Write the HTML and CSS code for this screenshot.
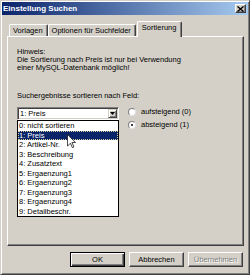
FILE: index.html
```html
<!DOCTYPE html>
<html>
<head>
<meta charset="utf-8">
<link rel="stylesheet" href="styles.css">
</head>
<body>
<div class="window">
  <div class="titlebar">
    <span class="title">Einstellung Suchen</span>
    <span class="close"><svg width="7" height="6" viewBox="0 0 7 6"><path d="M0.5 0.5 L6.5 5.5 M6.5 0.5 L0.5 5.5" stroke="#000" stroke-width="1.4"/></svg></span>
  </div>
  <div class="tabs">
    <div class="tab">Vorlagen</div>
    <div class="tab">Optionen für Suchfelder</div>
    <div class="tab active">Sortierung</div>
  </div>
  <div class="panel">
    <p class="hint">Hinweis:<br>Die Sortierung nach Preis ist nur bei Verwendung<br>einer MySQL-Datenbank möglich!</p>
    <p class="label">Suchergebnisse sortieren nach Feld:</p>
    <div class="row">
      <div class="combo">
        <div class="combo-box">
          <span class="value">1: Preis</span>
          <span class="arrow-btn"><svg width="5" height="3" viewBox="0 0 5 3"><path d="M0 0 H5 L2.5 3 Z" fill="#000"/></svg></span>
        </div>
        <ul class="list">
          <li>0: nicht sortieren</li>
          <li class="sel">1: Preis</li>
          <li>2: Artikel-Nr.</li>
          <li>3: Beschreibung</li>
          <li>4: Zusatztext</li>
          <li>5: Ergaenzung1</li>
          <li>6: Ergaenzung2</li>
          <li>7: Ergaenzung3</li>
          <li>8: Ergaenzung4</li>
          <li>9: Detailbeschr.</li>
        </ul>
        <svg class="cursor" width="9" height="14" viewBox="0 0 12 19"><path d="M0.5 0.5 L0.5 16.5 L4.5 12.5 L7.2 18.5 L9.3 17.6 L6.6 11.5 L11.5 11.5 Z" fill="#fff" stroke="#000" stroke-width="1"/></svg>
      </div>
      <div class="radios">
        <div class="radio"><span class="dot"></span><span>aufsteigend (0)</span></div>
        <div class="radio"><span class="dot checked"></span><span>absteigend (1)</span></div>
      </div>
    </div>
  </div>
  <div class="buttons">
    <button class="btn default">OK</button>
    <button class="btn">Abbrechen</button>
    <button class="btn disabled">Übernehmen</button>
  </div>
</div>
</body>
</html>
```
FILE: styles.css
```css
html, body {
  margin: 0;
  padding: 0;
  background: #d4d0c8;
}
.window {
  width: 250px;
  height: 275px;
  box-sizing: border-box;
  background: #d4d0c8;
  border: 1px solid;
  border-color: #d4d0c8 #404040 #404040 #d4d0c8;
  box-shadow: inset 1px 1px #fff, inset -1px -1px #808080;
  padding: 1px;
  display: flex;
  flex-direction: column;
  font-family: "Liberation Sans", Arial, sans-serif;
  font-size: 7.5px;
  color: #000;
}
.titlebar {
  height: 13px;
  flex: none;
  display: flex;
  align-items: center;
  justify-content: space-between;
  background: linear-gradient(to right, #0a246a, #a6caf0);
}
.title {
  color: #fff;
  font-weight: bold;
  font-size: 8px;
  line-height: 13px;
  padding-left: 1px;
}
.close {
  width: 11px;
  height: 9px;
  box-sizing: border-box;
  margin-right: 2px;
  background: #d4d0c8;
  border: 1px solid;
  border-color: #fff #404040 #404040 #fff;
  box-shadow: inset -1px -1px #808080;
  display: flex;
  align-items: center;
  justify-content: center;
}
.close svg { display: block; }
.tabs {
  flex: none;
  height: 15px;
  margin: 6px 4px 0 5px;
  padding-left: 2px;
  display: flex;
  align-items: flex-end;
  position: relative;
  z-index: 1;
}
.tab {
  height: 12px;
  box-sizing: border-box;
  border-top: 1px solid #fff;
  border-left: 1px solid #fff;
  border-right: 1px solid #404040;
  box-shadow: inset -1px 0 #808080;
  border-radius: 2px 2px 0 0;
  padding: 0 4px 0 3px;
  line-height: 11px;
  white-space: nowrap;
  background: #d4d0c8;
}
.tab.active {
  height: 16px;
  margin-bottom: -1px;
  margin-left: 1px;
  padding: 0 5px 0 4px;
  line-height: 11px;
}
.panel {
  flex: 1;
  margin: 0 4px 0 5px;
  border: 1px solid;
  border-color: #fff #404040 #404040 #fff;
  box-shadow: inset -1px -1px #808080;
  padding: 11px 0 0 9px;
}
.hint {
  margin: 0;
  line-height: 8px;
}
.label {
  margin: 20px 0 0 0;
  line-height: 8px;
}
.row {
  margin-top: 7px;
  display: flex;
  align-items: flex-start;
}
.combo {
  position: relative;
  width: 102px;
  flex: none;
}
.combo-box {
  height: 13px;
  box-sizing: border-box;
  border: 1px solid;
  border-color: #808080 #fff #fff #808080;
  box-shadow: inset 1px 1px #404040, inset -1px -1px #d4d0c8;
  background: #fff;
  display: flex;
  align-items: center;
  justify-content: space-between;
  padding: 0 1px 0 2px;
}
.value { line-height: 9px; }
.arrow-btn {
  width: 9px;
  height: 9px;
  box-sizing: border-box;
  background: #d4d0c8;
  border: 1px solid;
  border-color: #d4d0c8 #404040 #404040 #d4d0c8;
  box-shadow: inset 1px 1px #fff, inset -1px -1px #808080;
  display: flex;
  align-items: center;
  justify-content: center;
}
.arrow-btn svg { display: block; }
.list {
  position: absolute;
  top: 13px;
  left: 0;
  width: 102px;
  box-sizing: border-box;
  margin: 0;
  padding: 0;
  list-style: none;
  background: #fff;
  border: 1px solid #000;
  z-index: 2;
}
.list li {
  height: 9.5px;
  line-height: 9.5px;
  padding-left: 1px;
  white-space: nowrap;
}
.list li.sel {
  background: #0a246a;
  color: #fff;
  outline: 1px dotted #d8d0a0;
  outline-offset: -1px;
}
.cursor {
  position: absolute;
  left: 50px;
  top: 27px;
  z-index: 3;
}
.radios {
  margin-left: 9px;
  padding-top: 1px;
  display: flex;
  flex-direction: column;
  gap: 5px;
}
.radio {
  display: flex;
  align-items: center;
  height: 8px;
  line-height: 8px;
  gap: 5px;
}
.dot {
  width: 8px;
  height: 8px;
  box-sizing: border-box;
  border-radius: 50%;
  background: #fff;
  border: 1px solid;
  border-color: #808080 #e0e0e0 #e0e0e0 #808080;
  position: relative;
}
.dot.checked::after {
  content: "";
  position: absolute;
  left: 2px;
  top: 2px;
  width: 2px;
  height: 2px;
  border-radius: 50%;
  background: #000;
}
.buttons {
  flex: none;
  display: flex;
  justify-content: flex-end;
  gap: 4px;
  margin: 6px 5px 6px 0;
}
.btn {
  width: 55px;
  height: 15px;
  box-sizing: border-box;
  padding: 0;
  font-family: "Liberation Sans", Arial, sans-serif;
  font-size: 7.5px;
  color: #000;
  background: #d4d0c8;
  border: 1px solid;
  border-color: #fff #404040 #404040 #fff;
  box-shadow: inset -1px -1px #808080;
  border-radius: 0;
}
.btn.default {
  border-color: #000;
  box-shadow: inset 1px 1px #fff, inset -1px -1px #404040, inset -2px -2px #808080;
}
.btn.disabled {
  color: #808080;
  text-shadow: 1px 1px #fff;
}
```
